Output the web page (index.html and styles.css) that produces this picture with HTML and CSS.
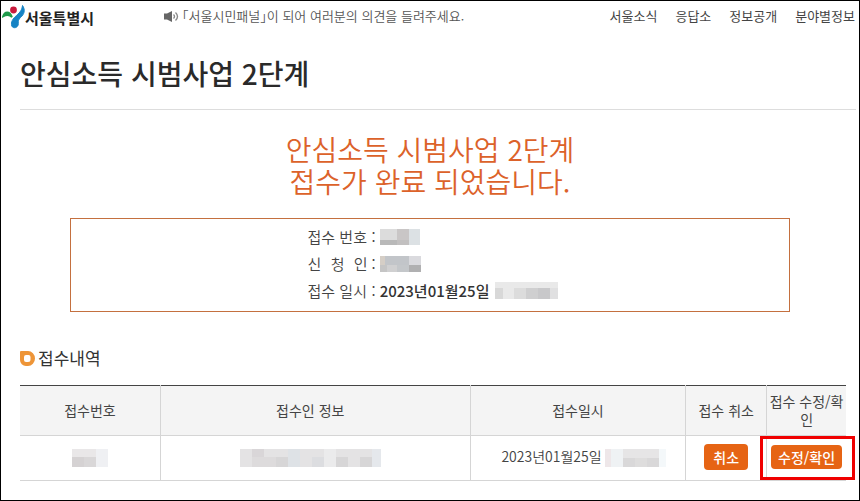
FILE: index.html
```html
<!DOCTYPE html>
<html lang="ko">
<head>
    <meta charset="UTF-8">
    <meta name="viewport" content="width=device-width, initial-scale=1.0">
    <title>안심소득 시범사업 2단계</title>
    <link rel="stylesheet" href="styles.css">
</head>
<body>
    <header class="top-bar">
        <a class="logo" href="#">
            <svg class="logo-mark" width="23" height="26" viewBox="0 0 23 26" aria-hidden="true">
                <path d="M1 13.500C2.500 8.500 7.500 7.500 10 14C7.500 11.500 4.500 11.500 1 13.500Z" fill="#1f9a4a" stroke="#1f9a4a" stroke-width="1.800"/>
                <circle cx="11.500" cy="7" r="3.400" fill="#c8193c"/>
                <path d="M20.500 2.500C23.500 7 22.500 11 18.500 14.500C16.500 16.500 16 18 16.300 20.500C16.500 25 11 26 9.800 23C8.500 19 11 15.500 14.500 12.500C18.500 9 20 6.500 20.500 2.500Z" fill="#1683c4" stroke="#1683c4"/>
            </svg>
            <span class="logo-text">서울특별시</span>
        </a>
        <p class="notice">
            <svg width="15" height="11" viewBox="0 0 15 11" aria-hidden="true">
                <path d="M0 2.500h3L8 0v11L3 8.500H0z" fill="#666"/>
                <path d="M9.500 3.500q2 2 0 4M11.500 1.500q4 4 0 8" fill="none" stroke="#888" stroke-width="1.300"/>
            </svg>
            <span>「서울시민패널」이 되어 여러분의 의견을 들려주세요.</span>
        </p>
        <nav class="top-nav">
            <a href="#">서울소식</a>
            <a href="#">응답소</a>
            <a href="#">정보공개</a>
            <a href="#">분야별정보</a>
        </nav>
    </header>

    <main class="content">
        <h1 class="page-title">안심소득 시범사업 2단계</h1>

        <p class="complete-message">안심소득 시범사업 2단계<br>접수가 완료 되었습니다.</p>

        <div class="receipt-box">
            <dl class="receipt">
                <div class="receipt-row">
                    <dt>접수 번호</dt>
                    <dd>
                        <svg class="mosaic" width="40" height="16" viewBox="0 0 40 16" aria-hidden="true">
                            <path fill="#dcdcdc" d="M0 0h17v11H0z"/>
                            <path fill="#c9c6c6" d="M17 0h12v11H17z"/>
                            <path fill="#dce1e4" d="M29 0h11v16H29z"/>
                            <path fill="#b9b9b9" d="M0 11h17v5H0z"/>
                            <path fill="#c2c0c0" d="M17 11h12v5H17z"/>
                        </svg>
                    </dd>
                </div>
                <div class="receipt-row">
                    <dt><span>신</span><span>청</span><span>인</span></dt>
                    <dd>
                        <svg class="mosaic" width="41" height="16" viewBox="0 0 41 16" aria-hidden="true">
                            <path fill="#d5cec6" d="M0 0h5v9H0z"/>
                            <path fill="#c2c5c9" d="M5 0h24v9H5z"/>
                            <path fill="#dadade" d="M29 0h12v9H29z"/>
                            <path fill="#c5c5c5" d="M0 9h7v7H0z"/>
                            <path fill="#d0d0d1" d="M7 9h10v7H7z"/>
                            <path fill="#c4c7ca" d="M17 9h12v7H17z"/>
                            <path fill="#b0b0b1" d="M29 9h12v7H29z"/>
                        </svg>
                    </dd>
                </div>
                <div class="receipt-row">
                    <dt>접수 일시</dt>
                    <dd>
                        <strong>2023년01월25일</strong>
                        <svg class="mosaic" width="63" height="17" viewBox="0 0 63 17" aria-hidden="true">
                            <path fill="#e9e9e9" d="M0 0h63v17H0z"/>
                            <path fill="#d8d8d8" d="M0 6h8v11H0z"/>
                            <path fill="#dcdcdc" d="M19 6h12v11H19z"/>
                            <path fill="#cfcfd0" d="M31 6h12v11H31z"/>
                            <path fill="#c8c8ca" d="M43 6h12v11H43z"/>
                            <path fill="#e0e0e1" d="M55 6h8v11H55z"/>
                        </svg>
                    </dd>
                </div>
            </dl>
        </div>

        <h2 class="section-title">
            <svg width="15" height="15" viewBox="0 0 15 15" aria-hidden="true">
                <path fill="#ee9538" fill-rule="evenodd" d="M1 0h7a7 7.500 0 0 1 0 15H6a6 6 0 0 1-6-6V1a1 1 0 0 1 1-1zM6 4a2 2 0 0 0-2 2v3a2 2 0 0 0 2 2h2a2.500 2.500 0 0 0 2.500-2.500V6A2 2 0 0 0 8.500 4z"/>
            </svg>
            접수내역
        </h2>

        <table class="history">
            <colgroup>
                <col class="col-number">
                <col class="col-person">
                <col class="col-date">
                <col class="col-cancel">
                <col class="col-edit">
            </colgroup>
            <thead>
                <tr>
                    <th scope="col">접수번호</th>
                    <th scope="col" class="person">접수인 정보</th>
                    <th scope="col">접수일시</th>
                    <th scope="col">접수 취소</th>
                    <th scope="col">접수 수정/확인</th>
                </tr>
            </thead>
            <tbody>
                <tr>
                    <td>
                        <svg class="mosaic" width="36" height="18" viewBox="0 0 36 18" aria-hidden="true">
                            <path fill="#e9e7e8" d="M0 0h24v8H0z"/>
                            <path fill="#d5d2d3" d="M0 8h12v10H0z"/>
                            <path fill="#d9d7d8" d="M12 8h12v10H12z"/>
                            <path fill="#eff0f3" d="M24 0h12v18H24z"/>
                        </svg>
                    </td>
                    <td class="person">
                        <svg class="mosaic" width="141" height="18" viewBox="0 0 141 18" aria-hidden="true">
                            <path fill="#e4e3e4" d="M0 0h141v18H0z"/>
                            <path fill="#d9d6d8" d="M12 0h12v8H12z"/>
                            <path fill="#dddbdc" d="M12 8h12v10H12zM24 8h12v10H24z"/>
                            <path fill="#d7d6d7" d="M36 8h12v10H36zM96 8h12v10H96zM120 8h12v10h-12z"/>
                            <path fill="#dee2e6" d="M48 0h12v18H48z"/>
                            <path fill="#dcdde0" d="M72 8h12v10H72z"/>
                            <path fill="#ebebec" d="M84 0h12v18H84z"/>
                            <path fill="#e5e8ec" d="M132 0h9v18h-9z"/>
                        </svg>
                    </td>
                    <td class="date">
                        2023년01월25일
                        <svg class="mosaic" width="61" height="18" viewBox="0 0 61 18" aria-hidden="true">
                            <path fill="#eee7e9" d="M0 0h6v18H0z"/>
                            <path fill="#eff2f4" d="M6 0h12v18H6z"/>
                            <path fill="#e6e5e6" d="M18 0h36v9H18z"/>
                            <path fill="#d9d8d9" d="M18 9h12v9H18zM42 9h12v9H42z"/>
                            <path fill="#dedddd" d="M30 9h12v9H30z"/>
                            <path fill="#f4f8fa" d="M54 0h7v18h-7z"/>
                        </svg>
                    </td>
                    <td><button class="btn" type="button">취소</button></td>
                    <td class="marked"><button class="btn" type="button">수정/확인</button></td>
                </tr>
            </tbody>
        </table>
    </main>
</body>
</html>
```

FILE: styles.css
```css
* {
    box-sizing: border-box;
}
body {
    margin: 0;
    min-height: 100vh;
    border: 1px solid #000;
    background: #fff;
    color: #444;
    font-family: "Noto Sans CJK KR", sans-serif;
    font-size: 14px;
    line-height: 18px;
}
h1, h2, p, dl, dd {
    margin: 0;
}
a {
    color: inherit;
    text-decoration: none;
}
svg {
    flex: none;
}

/* top bar */
.top-bar {
    display: flex;
    align-items: center;
    height: 30px;
    padding: 0 4px 0 1px;
    font-size: 13px;
}
.logo {
    display: flex;
    align-items: center;
    color: #222;
}
.logo-text {
    padding-top: 4px;
    font-size: 15px;
    font-weight: 700;
}
.notice {
    display: flex;
    align-items: center;
    gap: 3px;
    margin-left: 70px;
    color: #555;
    font-weight: 350;
    font-feature-settings: "halt";
}
.top-nav {
    display: flex;
    gap: 18px;
    margin-left: auto;
}

/* page */
.content {
    padding: 0 3px 0 19px;
}
.page-title {
    padding: 21px 0 15px;
    border-bottom: 1px solid #ddd;
    color: #2a2a2a;
    font-size: 28px;
    font-weight: 500;
    line-height: 42px;
}
.complete-message {
    padding: 23px 16px 21px 0;
    color: #dc622a;
    font-size: 28px;
    font-weight: 350;
    line-height: 32px;
    text-align: center;
}
.receipt-box {
    display: flex;
    justify-content: center;
    margin: 0 66px 0 50px;
    padding: 4px 0 7px 6px;
    border: 1px solid #c4703f;
}
.receipt {
    font-size: 15px;
}
.receipt-row {
    display: flex;
    align-items: center;
    height: 27px;
}
.receipt-row dt {
    display: flex;
    justify-content: space-between;
    width: 60px;
    font-weight: 350;
}
.receipt-row dd {
    display: flex;
    align-items: center;
    gap: 6px;
}
.receipt-row dd::before {
    content: ':';
    margin-left: 4px;
    margin-right: -2px;
    font-weight: 350;
}
.receipt-row strong {
    color: #333;
    font-weight: 500;
}
.mosaic {
    shape-rendering: crispEdges;
    vertical-align: middle;
}

/* history table */
.section-title {
    display: flex;
    align-items: center;
    gap: 3px;
    margin-top: 33px;
    color: #333;
    font-size: 17px;
    font-weight: 400;
    line-height: 26px;
}
.history {
    width: calc(100% - 10px);
    margin-top: 14px;
    border-collapse: collapse;
    border-top: 1px solid #444;
    table-layout: fixed;
    text-align: center;
}
.col-number {
    width: 17%;
}
.col-person {
    width: 37.5%;
}
.col-date {
    width: 26.1%;
}
.col-cancel {
    width: 9.8%;
}
.history th,
.history td {
    height: 50px;
    padding: 0 0 2px;
    border-bottom: 1px solid #d5d5d5;
    border-left: 1px solid #d5d5d5;
}
.history th {
    background: #f4f4f4;
    font-weight: 400;
    word-break: break-all;
}
.history td {
    height: 45px;
    font-weight: 350;
}
.history th:first-child,
.history td:first-child {
    border-left: 0;
}
.history .person {
    padding-right: 10px;
}
.history .date {
    padding-left: 12px;
}
.btn {
    padding: 3px 9px;
    border: 0;
    border-radius: 4px;
    background: #e66414;
    color: #fff;
    font-family: inherit;
    font-size: 14px;
    font-weight: 500;
    line-height: 20px;
    cursor: pointer;
}
.marked {
    position: relative;
}
.marked .btn {
    padding: 2px 7px;
}
/* red frame over the edit cell */
.marked::after {
    content: '';
    position: absolute;
    inset: 0 -9px 0 -7px;
    border: 3px solid #f00000;
    pointer-events: none;
}
```
